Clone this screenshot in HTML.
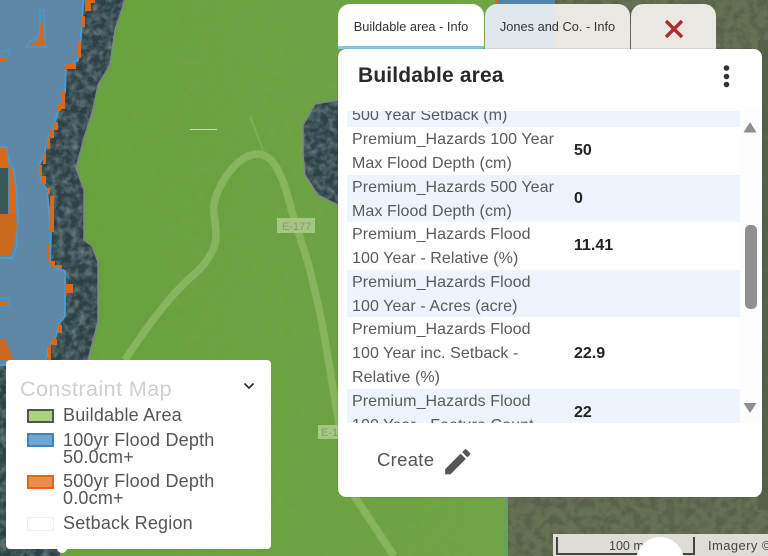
<!DOCTYPE html>
<html><head><meta charset="utf-8">
<style>
*{box-sizing:border-box}
html,body{margin:0;padding:0;width:768px;height:556px;overflow:hidden;background:#6ca040;font-family:"Liberation Sans",sans-serif}
#root{position:relative;width:768px;height:556px;overflow:hidden}
.abs{position:absolute;white-space:nowrap}
#map{position:absolute;left:0;top:0;display:block}
.tab{position:absolute;top:4px;height:45px;border-radius:12px 12px 0 0;font-size:12.8px;color:#333;text-align:center;line-height:45px}
#panel{position:absolute;left:338px;top:49px;width:424px;height:448px;background:#fff;border-radius:8px;box-shadow:0 0 1px rgba(0,0,0,.4)}
.row{position:absolute;left:9px;width:393px}
.l{position:absolute;left:5px;font-size:16px;line-height:24px;color:#5a5a5a;white-space:nowrap;letter-spacing:.08px}
.v{position:absolute;left:227px;font-size:16px;font-weight:bold;color:#222;line-height:24px}
.b{background:#edf4fe}
#legend{position:absolute;left:6px;top:360px;width:265px;height:189px;background:#fff;border-radius:4px}
.lt{position:absolute;left:57px;font-size:18px;line-height:17px;color:#555;white-space:nowrap;letter-spacing:.2px}
.sw{position:absolute;left:21px;width:27px;height:14px}
</style></head><body><div id="root">
<svg id="map" width="768" height="556" viewBox="0 0 768 556">
<defs>
<filter id="g" x="0" y="0" width="100%" height="100%"><feTurbulence type="fractalNoise" baseFrequency=".12" numOctaves="3" seed="3"/><feColorMatrix values="0 0 0 0 .25  0 0 0 0 .42  0 0 0 0 .12  .6 0 0 0 -.15"/></filter>
<filter id="t" x="0" y="0" width="100%" height="100%"><feTurbulence type="fractalNoise" baseFrequency=".14" numOctaves="3" seed="8"/><feColorMatrix values="0 0 0 0 .36  0 0 0 0 .46  0 0 0 0 .47  1 0 0 0 -.35"/></filter>
<filter id="p" x="0" y="0" width="100%" height="100%"><feTurbulence type="fractalNoise" baseFrequency=".12" numOctaves="3" seed="5"/><feColorMatrix values="0 0 0 0 .1  0 0 0 0 .12  0 0 0 0 .07  3.400 0 0 0 -1.350"/></filter>
<linearGradient id="gg" x1="0" x2="1" y1="0" y2="0"><stop offset="0" stop-color="#66a03c"/><stop offset="1" stop-color="#74a548"/></linearGradient>
<clipPath id="tc"><path d="M0 0H125L115 30L110 65L98 85L93 110L85 135L76 168L84 190L84 240L92 246L98 262L98 322L88 360L85 380L60 420L60 556H0Z"/></clipPath>
<clipPath id="bc"><path d="M303 125L315 104L338 100V205L318 195L305 175L303 155Z"/></clipPath>
</defs>
<rect width="768" height="556" fill="url(#gg)"/>
<rect width="768" height="556" filter="url(#g)" opacity=".3"/>
<!-- roads -->
<g fill="none" stroke="#87b55e" stroke-linejoin="round">
<path d="M125 360C150 322 172 294 190 278C205 266 216 250 216 236C216 222 213 214 214 205C216 188 236 154 258 154C272 154 282 172 290 205C298 232 306 255 310 270C316 295 322 320 325 340C330 370 335 400 340 430L355 497L394 556" stroke-width="7.500"/>
<path d="M263 150L250 116" stroke-width="2.500" opacity=".55"/>
<path d="M232 0V50" stroke-width="1.500" opacity=".15"/>
</g>
<rect x="190" y="129" width="27" height="1" fill="#c8dcb5"/>
<rect x="277" y="218" width="38" height="15" fill="#a6c683"/>
<text x="282" y="230" font-size="11" fill="#7fa25f" font-family="Liberation Sans">E-177</text>
<rect x="318" y="425" width="24" height="14" fill="#a6c683"/>
<text x="321" y="436" font-size="11" fill="#7fa25f" font-family="Liberation Sans">E-1</text>
<!-- trees left -->
<g clip-path="url(#tc)"><rect width="200" height="556" fill="#2c4145"/><rect width="200" height="556" filter="url(#t)"/></g>
<path d="M125 0L115 30L110 65L98 85L93 110L85 135L76 168L84 190L84 240L92 246L98 262L98 322L88 360" fill="none" stroke="#7f8488" stroke-width="1.500"/>
<!-- trees blob -->
<g clip-path="url(#bc)"><rect x="300" y="95" width="40" height="115" fill="#2c4145"/><rect x="300" y="95" width="40" height="115" filter="url(#t)"/></g>
<path d="M338 100L315 104L303 125L303 155L305 175L318 195L338 205" fill="none" stroke="#7f8488" stroke-width="1.500"/>
<!-- photo right -->
<rect x="508" y="497" width="260" height="59" fill="#667052"/>
<rect x="508" y="497" width="260" height="59" filter="url(#p)"/>
<rect x="555" y="0" width="213" height="50" fill="#667052"/>
<rect x="555" y="0" width="213" height="50" filter="url(#p)"/>
<rect x="758" y="40" width="10" height="470" fill="#545f48"/>
<rect x="758" y="40" width="10" height="470" filter="url(#p)"/>
<rect x="506.500" y="497" width="1.500" height="59" fill="#5a94b8"/>
<rect x="498" y="0" width="57" height="6" fill="#4f86ae"/>
<rect x="495" y="0" width="3" height="6" fill="#d8691a"/>
<!-- water -->
<path d="M-5 -5H84L82 18L80 48L78 60L66 67L65 92L60 106L55 122L48 138L44 155L39 165L40 178L47 190L51 230L50 262L56 268L65 271L65 316L60 322L56 336L48 348L46 365H-5Z" fill="#5f87a6" stroke="#4a99cf" stroke-width="2"/>
<!-- left orange island -->
<path d="M-3 147H6L10 165L14 170L17 196L18 222L16 232L17 246L12 258H-3Z" fill="none" stroke="#4a99cf" stroke-width="2"/>
<path d="M0 148H6L9 167L13 170L16 196L16 214H9V168H0Z" fill="#d8691a"/>
<path d="M0 168H8V214H0Z" fill="#3a5a58"/>
<path d="M0 214H16L17 228L14 245L10 256H0Z" fill="#c96a20"/>
<path d="M0 340H6L10 352L14 360H0Z" fill="#c96a20"/>
<!-- top small inlet -->
<path d="M40 10H44L45 44L47 47H26L29 42L38 38L40 28Z" fill="#5f87a6" stroke="#4a99cf" stroke-width="1.500"/>
<path d="M41 22L43 22L45 46H28L38 40Z" fill="#cf6a1f"/>
<path d="M0 52L7 50L9 47V56L0 60Z" fill="#5f87a6" stroke="#4a99cf" stroke-width="1"/>
<rect x="0" y="58" width="6" height="4" fill="#d8691a"/>
<path d="M0 298H6L9 296V306H0Z" fill="#5f87a6" stroke="#4a99cf" stroke-width="1"/>
<rect x="0" y="301" width="8" height="4" fill="#d8691a"/>
<g fill="#d8691a">
<rect x="85" y="0" width="10" height="3"/><rect x="85" y="3" width="6" height="8"/>
<rect x="81" y="16" width="4" height="11"/><rect x="78" y="42" width="3" height="16"/><rect x="65" y="63" width="11" height="6"/>
<rect x="61" y="92" width="4" height="17"/><rect x="57" y="104" width="4" height="7"/><rect x="53" y="122" width="5" height="8"/><rect x="50" y="130" width="4" height="8"/><rect x="47" y="138" width="3" height="11"/><rect x="43" y="153" width="3" height="11"/>
<rect x="39" y="165" width="3" height="12"/><rect x="41" y="176" width="5" height="8"/><rect x="47" y="188" width="3" height="6"/>
<rect x="50" y="196" width="4" height="36"/><rect x="47" y="243" width="3" height="18"/><rect x="50" y="261" width="5" height="6"/><rect x="55" y="265" width="7" height="3"/>
<rect x="65" y="284" width="8" height="9"/><rect x="58" y="325" width="4" height="8"/><rect x="52" y="339" width="5" height="6"/><rect x="48" y="345" width="3" height="15"/>
</g>
<circle cx="62" cy="548" r="5" fill="#fff"/>
<!-- scale -->
<rect x="553" y="534" width="215" height="22" fill="#dedcd6"/>
<path d="M557 537V554H694V537" fill="none" stroke="#444" stroke-width="2"/>
<text x="609" y="550" font-size="12.500" fill="#444" font-family="Liberation Sans">100 m</text>
<path d="M636.530 556A24 24 0 0 1 683.470 556Z" fill="#fff"/>
<text x="708" y="550" font-size="13" fill="#444" font-family="Liberation Sans" letter-spacing=".4">Imagery ©</text>
</svg>

<div class="tab" style="left:338px;width:146px;background:#fff;border-bottom:3px solid #7fc8e8;line-height:45px">Buildable area - Info</div>
<div class="tab" style="left:485px;width:145px;background:linear-gradient(90deg,#e0e7ed 0,#e0e7ed 48%,#ebe8e3 48%);">Jones and Co. - Info</div>
<div class="tab" style="left:631px;width:85px;background:#ebe8e3"></div>
<svg class="abs" style="left:663px;top:18px" width="22" height="22" viewBox="0 0 22 22"><path d="M3 3L19 19M19 3L3 19" stroke="#b22a2a" stroke-width="3.400" fill="none"/></svg>

<div id="panel">
<div class="abs" style="left:20px;top:15px;font-size:21px;font-weight:bold;color:#2a2a2a;line-height:24px;letter-spacing:.15px">Buildable area</div>
<svg class="abs" style="left:384px;top:15px" width="10" height="26"><circle cx="4.500" cy="4" r="2.800" fill="#333"/><circle cx="4.500" cy="12.500" r="2.800" fill="#333"/><circle cx="4.500" cy="20.500" r="2.800" fill="#333"/></svg>

<div class="abs" style="left:0;top:62px;width:424px;height:312px;overflow:hidden">
 <div class="row b" style="top:0;height:16px"><div class="l" style="top:-7px">500 Year Setback (m)</div></div>
 <div class="row" style="top:16px;height:48px"><div class="l" style="top:1px">Premium_Hazards 100 Year<br>Max Flood Depth (cm)</div><div class="v" style="top:12px">50</div></div>
 <div class="row b" style="top:64px;height:47px"><div class="l" style="top:1px">Premium_Hazards 500 Year<br>Max Flood Depth (cm)</div><div class="v" style="top:12px">0</div></div>
 <div class="row" style="top:111px;height:48px"><div class="l" style="top:1px">Premium_Hazards Flood<br>100 Year - Relative (%)</div><div class="v" style="top:12px">11.41</div></div>
 <div class="row b" style="top:159px;height:47px"><div class="l" style="top:1px">Premium_Hazards Flood<br>100 Year - Acres (acre)</div></div>
 <div class="row" style="top:206px;height:72px"><div class="l" style="top:1px">Premium_Hazards Flood<br>100 Year inc. Setback -<br>Relative (%)</div><div class="v" style="top:25px">22.9</div></div>
 <div class="row b" style="top:278px;height:48px"><div class="l" style="top:1px">Premium_Hazards Flood<br>100 Year - Feature Count</div><div class="v" style="top:12px">22</div></div>
 <div class="abs" style="left:402px;top:0;width:22px;height:312px;background:#fcfcfc"></div>
 <svg class="abs" style="left:405px;top:0" width="19" height="312"><path d="M0.500 21.500L7 11L13.500 21.500Z" fill="#8f8f8f"/><rect x="2" y="114" width="12" height="84" rx="5" fill="#909090"/><path d="M0.500 292H13.500L7 302Z" fill="#8f8f8f"/></svg>
</div>

<div class="abs" style="left:39px;top:400px;font-size:18.500px;line-height:22px;color:#555;letter-spacing:.3px">Create</div>
<svg class="abs" style="left:103px;top:396px" width="33.500" height="33.500" viewBox="0 0 24 24"><path fill="#555" d="M3 17.250V21h3.750L17.810 9.940l-3.750-3.750L3 17.250zM20.710 7.040c.39-.39.39-1.020 0-1.410l-2.340-2.340c-.39-.39-1.020-.39-1.410 0l-1.830 1.830 3.750 3.750 1.830-1.830z"/></svg>
</div>

<div id="legend">
<div class="abs" style="left:14px;top:17px;font-size:21.500px;line-height:24px;color:#cfcfcf;letter-spacing:.45px">Constraint Map</div>
<svg class="abs" style="left:237px;top:22px" width="12" height="8"><path d="M1.500 1.500L6 6L10.500 1.500" fill="none" stroke="#333" stroke-width="1.800"/></svg>
<div class="sw" style="top:49px;background:#a9d27a;border:2.500px solid #555"></div>
<div class="lt" style="top:47px">Buildable Area</div>
<div class="sw" style="top:73px;background:#72a5d0;border:2.500px solid #3d85c0"></div>
<div class="lt" style="top:72px">100yr Flood Depth<br>50.0cm+</div>
<div class="sw" style="top:115px;background:#ec8c4e;border:2.500px solid #e2661a"></div>
<div class="lt" style="top:113px">500yr Flood Depth<br>0.0cm+</div>
<div class="sw" style="top:157px;background:#fff;border:1px solid #eee"></div>
<div class="lt" style="top:155px">Setback Region</div>
</div>
</div></body></html>
